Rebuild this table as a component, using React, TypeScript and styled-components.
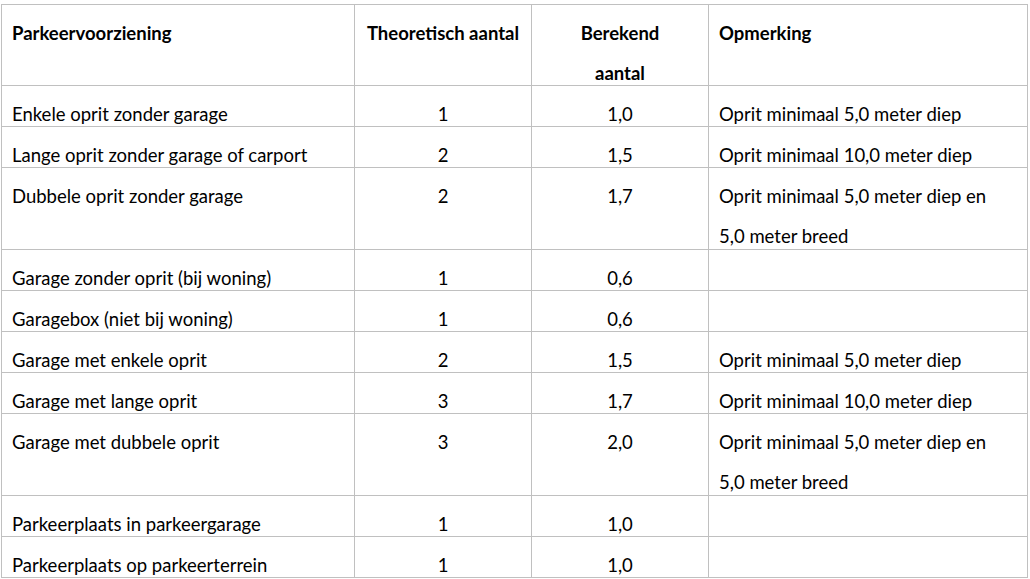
import React from "react";
import styled, { createGlobalStyle } from "styled-components";

const Global = createGlobalStyle`
  html, body { margin: 0; padding: 0; background: #ffffff; }
  body { font-family: "Lato", "Open Sans", sans-serif; color: #000; }
`;

const Page = styled.div`
  padding: 4px 0 0 1px;
`;

const Table = styled.table`
  border-collapse: collapse;
  table-layout: fixed;
  width: 1026px;
  border: 1px solid #808080;
  font-size: 18.5px;
`;

const Cell = styled.td<{ $center?: boolean; $bold?: boolean; $tall?: boolean }>`
  border: 1px solid #c0c0c0;
  padding: 8px 10px ${(p) => (p.$tall ? "1px" : "0")} 10px;
  line-height: 40px;
  vertical-align: top;
  text-align: ${(p) => (p.$center ? "center" : "left")};
  font-weight: ${(p) => (p.$bold ? 700 : 400)};
  white-space: nowrap;
`;

const Text = styled.div`
  margin-bottom: -8px;
`;

type Row = [string, string, string, string[]];

const rows: Row[] = [
  ["Enkele oprit zonder garage", "1", "1,0", ["Oprit minimaal 5,0 meter diep"]],
  ["Lange oprit zonder garage of carport", "2", "1,5", ["Oprit minimaal 10,0 meter diep"]],
  ["Dubbele oprit zonder garage", "2", "1,7", ["Oprit minimaal 5,0 meter diep en", "5,0 meter breed"]],
  ["Garage zonder oprit (bij woning)", "1", "0,6", []],
  ["Garagebox (niet bij woning)", "1", "0,6", []],
  ["Garage met enkele oprit", "2", "1,5", ["Oprit minimaal 5,0 meter diep"]],
  ["Garage met lange oprit", "3", "1,7", ["Oprit minimaal 10,0 meter diep"]],
  ["Garage met dubbele oprit", "3", "2,0", ["Oprit minimaal 5,0 meter diep en", "5,0 meter breed"]],
  ["Parkeerplaats in parkeergarage", "1", "1,0", []],
  ["Parkeerplaats op parkeerterrein", "1", "1,0", []],
];

export default function App() {
  return (
    <Page>
      <Global />
      <Table>
        <colgroup>
          <col style={{ width: 353 }} />
          <col style={{ width: 177 }} />
          <col style={{ width: 177 }} />
          <col style={{ width: 319 }} />
        </colgroup>
        <thead>
          <tr>
            <Cell as="th" $bold>
              <Text>Parkeervoorziening</Text>
            </Cell>
            <Cell as="th" $bold $center>
              <Text>Theoretisch aantal</Text>
            </Cell>
            <Cell as="th" $bold $center>
              <Text>
                Berekend
                <br />
                aantal
              </Text>
            </Cell>
            <Cell as="th" $bold>
              <Text>Opmerking</Text>
            </Cell>
          </tr>
        </thead>
        <tbody>
          {rows.map((r, i) => {
            const tall = r[3].length > 1;
            return (
              <tr key={i}>
                <Cell $tall={tall}>
                  <Text>{r[0]}</Text>
                </Cell>
                <Cell $center $tall={tall}>
                  <Text>{r[1]}</Text>
                </Cell>
                <Cell $center $tall={tall}>
                  <Text>{r[2]}</Text>
                </Cell>
                <Cell $tall={tall}>
                  <Text>
                    {r[3].length === 0
                      ? "\u00a0"
                      : r[3].map((l, j) => (
                          <React.Fragment key={j}>
                            {j > 0 && <br />}
                            {l}
                          </React.Fragment>
                        ))}
                  </Text>
                </Cell>
              </tr>
            );
          })}
        </tbody>
      </Table>
    </Page>
  );
}
